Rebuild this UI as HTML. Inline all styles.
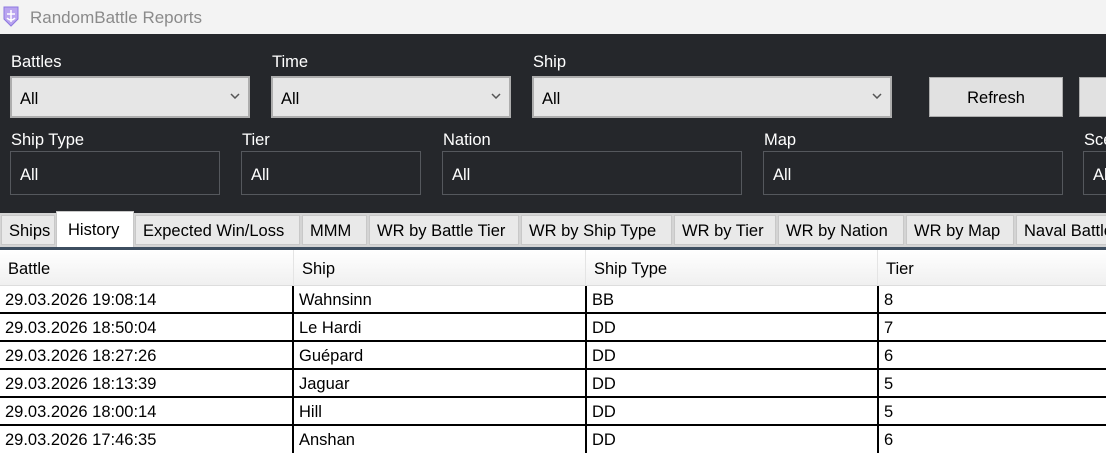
<!DOCTYPE html><html><head><style>
*{margin:0;padding:0;box-sizing:border-box}
body{width:1106px;height:453px;overflow:hidden;background:#fff;font-family:"Liberation Sans",sans-serif;position:relative}
.a{position:absolute}
.title{left:0;top:0;width:1106px;height:34px;background:#f3f3f3}
.dark{left:0;top:34px;width:1106px;height:179px;background:#25272b}
.lbl{color:#fff;font-size:16.5px}
.cb{background:#e6e6e6;border:2px solid #adadad;color:#000;font-size:16.5px;padding:12px 0 0 8px;height:42px}
.cb svg{position:absolute;right:8px;top:15px}
.tb{border:1px solid #55585d;color:#fff;font-size:16.5px;padding:14px 0 0 9px;height:44px}
.btn{background:#e1e1e1;border:1px solid #adadad;font-size:16.5px;text-align:center;padding-top:11px;height:40px;color:#000}
.tabs{left:0;top:213px;width:1106px;height:35px;background:#d4d4d4}
.tab{top:215px;height:30px;background:#e9e9e9;border:1px solid #c8c8c8;font-size:16.5px;padding:6px 0 0 7px;white-space:nowrap;overflow:hidden;color:#000}
.hdr{left:0;top:250px;width:1106px;height:36px;background:linear-gradient(#fff,#f0f0f0);border-bottom:1px solid #ddd}
.hc{top:250px;height:36px;font-size:16.5px;padding:10px 0 0 8px;border-left:1px solid #e4e4e4}
.row{left:0;width:1106px;height:28px;border-bottom:2px solid #000;font-size:16.5px}
.row span{position:absolute;top:5px}
.vl{top:286px;width:2px;height:167px;background:#000}
</style></head><body>
<div class="a title"></div>
<svg class="a" style="left:2px;top:4px" width="18" height="24" viewBox="0 0 18 24"><path d="M2 3 L16 3 L16 15 L9 22 L2 15 Z" fill="#b9a4ef" stroke="#8d77e0"/><path d="M9 6 V18 M5 10 H13 M5 14 Q9 18 13 14" stroke="#fff" stroke-width="1.5" fill="none"/></svg>
<div class="a" style="left:30px;top:8px;font-size:17px;color:#8a8a8a">RandomBattle Reports</div>
<div class="a dark"></div>
<div class="a lbl" style="left:11px;top:53px">Battles</div>
<div class="a lbl" style="left:272px;top:53px">Time</div>
<div class="a lbl" style="left:533px;top:53px">Ship</div>
<div class="a cb" style="left:10px;top:76px;width:240px">All<svg width="10" height="6"><path d="M1 1L5 5L9 1" stroke="#555" stroke-width="1.5" fill="none"/></svg></div>
<div class="a cb" style="left:271px;top:76px;width:240px">All<svg width="10" height="6"><path d="M1 1L5 5L9 1" stroke="#555" stroke-width="1.5" fill="none"/></svg></div>
<div class="a cb" style="left:532px;top:76px;width:360px">All<svg width="10" height="6"><path d="M1 1L5 5L9 1" stroke="#555" stroke-width="1.5" fill="none"/></svg></div>
<div class="a btn" style="left:929px;top:77px;width:134px">Refresh</div>
<div class="a btn" style="left:1079px;top:77px;width:40px"></div>
<div class="a lbl" style="left:11px;top:131px">Ship Type</div>
<div class="a lbl" style="left:242px;top:131px">Tier</div>
<div class="a lbl" style="left:443px;top:131px">Nation</div>
<div class="a lbl" style="left:764px;top:131px">Map</div>
<div class="a lbl" style="left:1084px;top:131px">Sce</div>
<div class="a tb" style="left:10px;top:151px;width:210px">All</div>
<div class="a tb" style="left:241px;top:151px;width:180px">All</div>
<div class="a tb" style="left:442px;top:151px;width:300px">All</div>
<div class="a tb" style="left:763px;top:151px;width:300px">All</div>
<div class="a tb" style="left:1083px;top:151px;width:40px">All</div>
<div class="a tabs"></div>
<div class="a tab" style="left:1px;width:54px">Ships</div>
<div class="a tab" style="left:135px;width:165px">Expected Win/Loss</div>
<div class="a tab" style="left:302px;width:65px">MMM</div>
<div class="a tab" style="left:369px;width:150px">WR by Battle Tier</div>
<div class="a tab" style="left:521px;width:151px">WR by Ship Type</div>
<div class="a tab" style="left:674px;width:102px">WR by Tier</div>
<div class="a tab" style="left:778px;width:126px">WR by Nation</div>
<div class="a tab" style="left:906px;width:108px">WR by Map</div>
<div class="a tab" style="left:1016px;width:100px">Naval Battles</div>
<div class="a tab" style="left:56px;top:211px;width:78px;height:36px;background:#fff;padding:9px 0 0 11px;border-bottom:none">History</div>
<div class="a" style="left:0;top:247px;width:1106px;height:3px;background:#3d4e60"></div>
<div class="a hdr"></div>
<div class="a hc" style="left:0;border:none">Battle</div>
<div class="a hc" style="left:293px">Ship</div>
<div class="a hc" style="left:585px">Ship Type</div>
<div class="a hc" style="left:877px">Tier</div>
<div class="a row" style="top:286px"><span style="left:5px">29.03.2026 19:08:14</span><span style="left:299px">Wahnsinn</span><span style="left:592px">BB</span><span style="left:884px">8</span></div>
<div class="a row" style="top:314px"><span style="left:5px">29.03.2026 18:50:04</span><span style="left:299px">Le Hardi</span><span style="left:592px">DD</span><span style="left:884px">7</span></div>
<div class="a row" style="top:342px"><span style="left:5px">29.03.2026 18:27:26</span><span style="left:299px">Guépard</span><span style="left:592px">DD</span><span style="left:884px">6</span></div>
<div class="a row" style="top:370px"><span style="left:5px">29.03.2026 18:13:39</span><span style="left:299px">Jaguar</span><span style="left:592px">DD</span><span style="left:884px">5</span></div>
<div class="a row" style="top:398px"><span style="left:5px">29.03.2026 18:00:14</span><span style="left:299px">Hill</span><span style="left:592px">DD</span><span style="left:884px">5</span></div>
<div class="a row" style="top:426px;border:none"><span style="left:5px">29.03.2026 17:46:35</span><span style="left:299px">Anshan</span><span style="left:592px">DD</span><span style="left:884px">6</span></div>
<div class="a vl" style="left:292px"></div>
<div class="a vl" style="left:585px"></div>
<div class="a vl" style="left:877px"></div>
</body></html>
